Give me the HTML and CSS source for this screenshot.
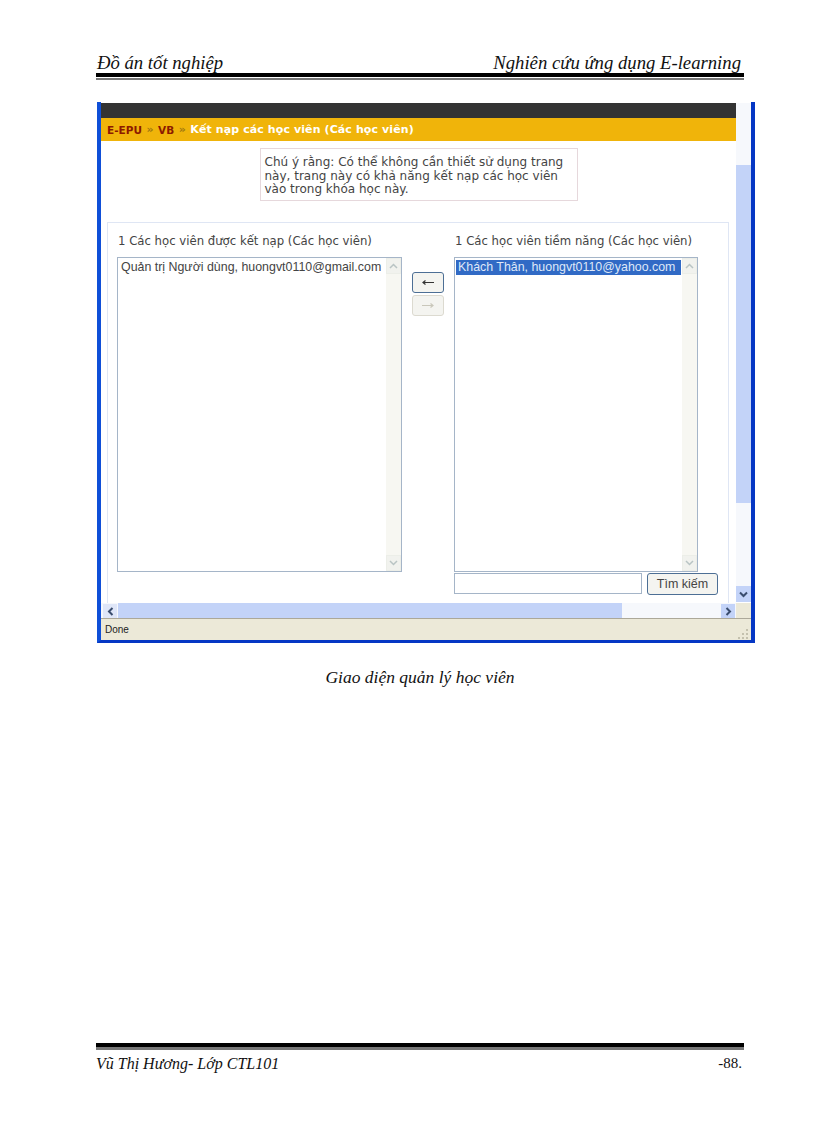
FILE: index.html
```html
<!DOCTYPE html>
<html lang="en">
<head>
    <meta charset="UTF-8">
    <title>Giao diện quản lý học viên</title>
    <link rel="stylesheet" href="styles.css">
</head>
<body>
    <div class="page">
        <div class="doc-header">
            <span>Đồ án tốt nghiệp</span>
            <span>Nghiên cứu ứng dụng E-learning</span>
        </div>

        <div class="window">
            <div class="viewport">
                <div class="content">
                    <div class="topbar"></div>
                    <div class="breadcrumb">
                        <span class="crumb">E-EPU</span><span class="sep">»</span><span class="crumb">VB</span><span class="sep">»</span><span class="current">Kết nạp các học viên (Các học viên)</span>
                    </div>
                    <div class="note">Chú ý rằng: Có thể không cần thiết sử dụng trang này, trang này có khả năng kết nạp các học viên vào trong khóa học này.</div>

                    <div class="panel">
                        <div class="col-left">
                            <div class="list-title">1 Các học viên được kết nạp (Các học viên)</div>
                            <div class="listbox">
                                <div class="list-items"><span class="item">Quản trị Người dùng, huongvt0110@gmail.com</span></div>
                                <div class="list-scroll">
                                    <div class="list-btn"><svg width="9" height="6" viewBox="0 0 9 6"><path d="M1 5l3.5-3.5L8 5" fill="none" stroke="#b9c4c4" stroke-width="1.5"/></svg></div>
                                    <div class="list-btn"><svg width="9" height="6" viewBox="0 0 9 6"><path d="M1 1l3.5 3.5L8 1" fill="none" stroke="#b9c4c4" stroke-width="1.5"/></svg></div>
                                </div>
                            </div>
                        </div>

                        <div class="col-buttons">
                            <div class="move-btn"><svg width="14" height="7" viewBox="0 0 14 7"><path d="M13 3.5H2M4.5 1.5L2 3.5l2.5 2" fill="none" stroke="#333" stroke-width="1.2"/></svg></div>
                            <div class="move-btn disabled"><svg width="14" height="7" viewBox="0 0 14 7"><path d="M1 3.5h11M9.5 1.5l2.5 2-2.5 2" fill="none" stroke="#c9c7ba" stroke-width="1.2"/></svg></div>
                        </div>

                        <div class="col-right">
                            <div class="list-title">1 Các học viên tiềm năng (Các học viên)</div>
                            <div class="listbox short">
                                <div class="list-items"><span class="item selected">Khách Thân, huongvt0110@yahoo.com</span></div>
                                <div class="list-scroll">
                                    <div class="list-btn"><svg width="9" height="6" viewBox="0 0 9 6"><path d="M1 5l3.5-3.5L8 5" fill="none" stroke="#b9c4c4" stroke-width="1.5"/></svg></div>
                                    <div class="list-btn"><svg width="9" height="6" viewBox="0 0 9 6"><path d="M1 1l3.5 3.5L8 1" fill="none" stroke="#b9c4c4" stroke-width="1.5"/></svg></div>
                                </div>
                            </div>
                            <div class="search-row">
                                <div class="search-input"></div>
                                <div class="search-btn">Tìm kiếm</div>
                            </div>
                        </div>
                    </div>
                </div>

                <div class="vscroll">
                    <div class="vscroll-track"></div>
                    <div class="vscroll-thumb"></div>
                    <div class="vscroll-rest"></div>
                    <div class="scroll-arrow"><svg width="9" height="7" viewBox="0 0 9 7"><path d="M1 1.5l3.5 3.5L8 1.5" fill="none" stroke="#3a4d6e" stroke-width="2"/></svg></div>
                </div>
            </div>

            <div class="hscroll">
                <div class="scroll-arrow"><svg width="7" height="9" viewBox="0 0 7 9"><path d="M5.5 1L2 4.5 5.5 8" fill="none" stroke="#3a4d6e" stroke-width="2"/></svg></div>
                <div class="hscroll-thumb"></div>
                <div class="scroll-arrow"><svg width="7" height="9" viewBox="0 0 7 9"><path d="M1.5 1L5 4.5 1.5 8" fill="none" stroke="#3a4d6e" stroke-width="2"/></svg></div>
                <div class="scroll-corner"></div>
            </div>

            <div class="statusbar">
                <span>Done</span>
                <svg class="grip" width="12" height="12" viewBox="0 0 12 12"><path d="M9 1h2v2H9zM5 5h2v2H5zM9 5h2v2H9zM1 9h2v2H1zM5 9h2v2H5zM9 9h2v2H9z" fill="#c4c1ae"/></svg>
            </div>
        </div>

        <div class="caption">Giao diện quản lý học viên</div>

        <div class="doc-footer">
            <span>Vũ Thị Hương- Lớp CTL101</span>
            <span class="page-no">-88.</span>
        </div>
    </div>
</body>
</html>
```
FILE: styles.css
```css
* {
    box-sizing: border-box;
    margin: 0;
    padding: 0;
}

body {
    background: #fff;
    color: #111;
    font-family: "Liberation Serif", serif;
}

.page {
    height: 1123px;
    padding: 52px 61px 0 96px;
    display: flex;
    flex-direction: column;
    overflow: hidden;
}

.doc-header {
    height: 28px;
    margin-right: 11px;
    padding: 0 3px 7px 1px;
    display: flex;
    justify-content: space-between;
    align-items: flex-end;
    background: linear-gradient(#000 0 4px, #fff 4px 5px, #777 5px 7px) bottom / 100% 7px no-repeat;
    font-size: 18.7px;
    font-style: italic;
    line-height: 21px;
}

.window {
    margin: 22px 0 0 1px;
    height: 541px;
    display: flex;
    flex-direction: column;
    background: #fff;
    border-left: 4px solid #0f4fd8;
    border-right: 4px solid #0537c4;
    border-bottom: 3px solid #0537c4;
    padding-top: 1px;
    font-family: "DejaVu Sans", sans-serif;
    color: #444;
}

.viewport {
    flex: 1;
    min-height: 0;
    display: flex;
}

.content {
    width: 635px;
    display: flex;
    flex-direction: column;
    min-height: 0;
}

.topbar {
    height: 15px;
    background: #333;
}

.breadcrumb {
    height: 23px;
    padding-left: 6px;
    display: flex;
    align-items: center;
    background: #f0b40a;
    font-size: 11px;
    font-weight: bold;
}

.crumb {
    color: #8c1a00;
    font-size: 10.5px;
}

.sep {
    margin: 0 4.5px;
    color: #a07810;
}

.current {
    color: #fff;
    letter-spacing: 0.1px;
}

.note {
    width: 318px;
    height: 53px;
    margin: 7px auto 0;
    padding: 7px 4px 0;
    border: 1px solid #e6d8dc;
    font-size: 12px;
    line-height: 13.5px;
}

.panel {
    flex: 1;
    margin: 21px 7px 0 6px;
    padding: 10px 0 0 9px;
    display: grid;
    grid-template-columns: 285px 52px 264px;
    border: 1px solid #dfe6f4;
    border-bottom: 0;
}

.list-title {
    height: 24px;
    font-size: 11.7px;
    line-height: 16px;
    padding-left: 1px;
}

.listbox {
    width: 285px;
    height: 315px;
    display: flex;
    border: 1px solid #a5b5c8;
}

.listbox.short {
    width: 244px;
}

.list-items {
    flex: 1;
    padding: 2px 1px;
    font-family: "Liberation Sans", sans-serif;
    font-size: 12.4px;
    line-height: 15px;
}

.item {
    display: block;
    padding-left: 2px;
    white-space: nowrap;
}

.item.selected {
    background: #316ac5;
    color: #dfe8f8;
}

.list-scroll {
    width: 15px;
    display: flex;
    flex-direction: column;
    justify-content: space-between;
    background: #f7f7f2;
}

.list-btn {
    height: 16px;
    display: flex;
    align-items: center;
    justify-content: center;
    background: #f1f2ee;
    border: 1px solid #eceee8;
}

.col-buttons {
    padding: 39px 0 0 10px;
    display: flex;
    flex-direction: column;
    gap: 2px;
}

.move-btn {
    width: 32px;
    height: 21px;
    display: flex;
    align-items: center;
    justify-content: center;
    background: #f4f4f0;
    border: 1px solid #4d6f95;
    border-radius: 3px;
}

.move-btn.disabled {
    border-color: #dcdad0;
}

.search-row {
    margin-top: 1px;
    display: flex;
    gap: 5px;
}

.search-input {
    width: 188px;
    height: 21px;
    border: 1px solid #a5b5c8;
}

.search-btn {
    width: 71px;
    height: 22px;
    display: flex;
    align-items: center;
    justify-content: center;
    background: #f4f4f0;
    border: 1px solid #4d6f95;
    border-radius: 3px;
    font-family: "Liberation Sans", sans-serif;
    font-size: 12.5px;
}

.vscroll {
    width: 15px;
    display: flex;
    flex-direction: column;
}

.vscroll-track {
    height: 62px;
    background: #f6f8fc;
}

.vscroll-thumb {
    height: 338px;
    background: #c3d3f8;
}

.vscroll-rest {
    flex: 1;
    background: #f6f8fc;
}

.scroll-arrow {
    width: 14px;
    height: 15px;
    flex-shrink: 0;
    display: flex;
    align-items: center;
    justify-content: center;
    background: #c3d3f8;
}

.vscroll .scroll-arrow {
    width: 15px;
    height: 16px;
    margin-bottom: 1px;
}

.hscroll {
    height: 15px;
    padding-left: 2px;
    display: flex;
    align-items: stretch;
    background: #f6f8fc;
}

.hscroll .scroll-arrow {
    height: 14px;
    margin-top: 1px;
}

.hscroll .scroll-arrow:first-child {
    background: #dfe6f8;
}

.hscroll-thumb {
    width: 504px;
    margin-left: 1px;
    margin-right: auto;
    background: #c3d3f8;
}

.scroll-corner {
    width: 15px;
    margin-left: 1px;
    background: #ece9d8;
}

.statusbar {
    height: 22px;
    padding: 0 2px 0 4px;
    display: flex;
    align-items: center;
    justify-content: space-between;
    background: #ece9d8;
    border-top: 1px solid #aca899;
    font-family: "Liberation Sans", sans-serif;
    font-size: 10px;
    color: #222;
}

.grip {
    align-self: flex-end;
}

.caption {
    margin-top: 24px;
    margin-right: 11px;
    text-align: center;
    font-size: 17.5px;
    font-style: italic;
    line-height: 20px;
}

.doc-footer {
    margin-top: auto;
    margin-bottom: 50px;
    margin-right: 11px;
    padding: 11px 2px 0 0;
    display: flex;
    justify-content: space-between;
    background: linear-gradient(#000 0 4px, #777 4px 7px) top / 100% 7px no-repeat;
    font-size: 16px;
    font-style: italic;
    line-height: 19px;
}

.page-no {
    font-style: normal;
    font-size: 15px;
}
```
